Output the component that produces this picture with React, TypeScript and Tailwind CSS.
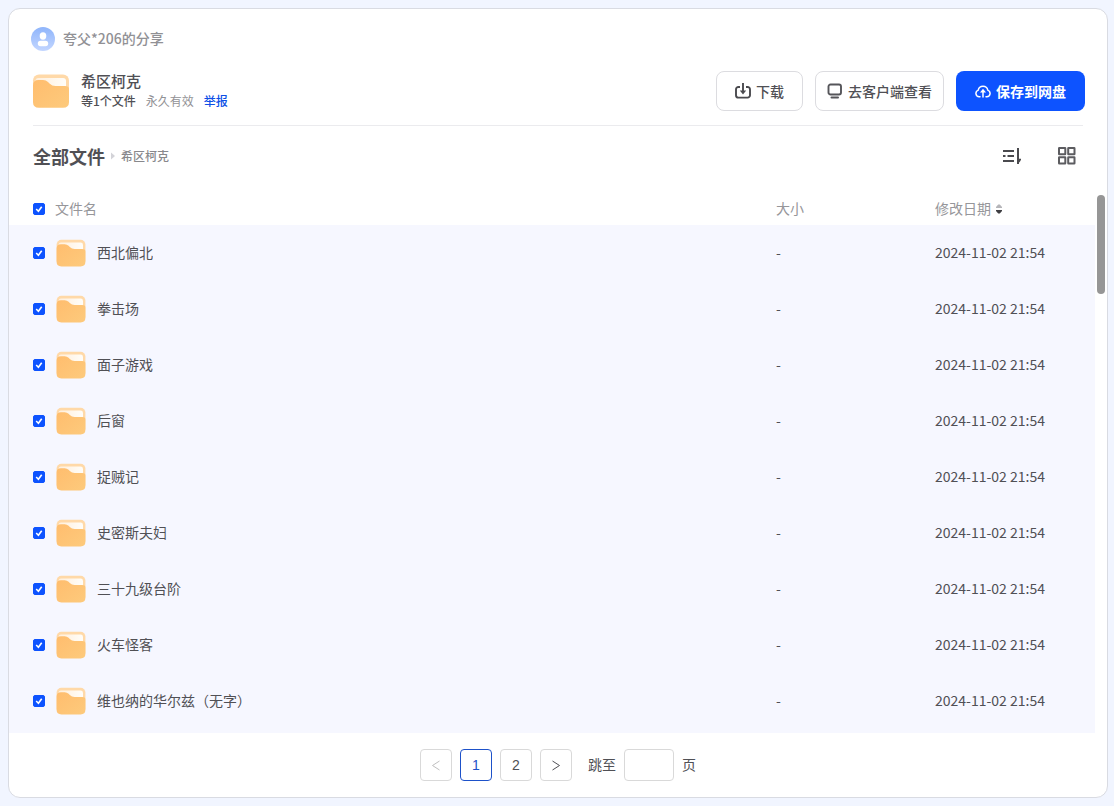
import React from 'react';

const FILES = [
  '西北偏北',
  '拳击场',
  '面子游戏',
  '后窗',
  '捉贼记',
  '史密斯夫妇',
  '三十九级台阶',
  '火车怪客',
  '维也纳的华尔兹（无字）',
];

const MODIFIED_AT = '2024-11-02 21:54';

function FolderIcon({ className }: { className?: string }) {
  return (
    <svg viewBox="0 0 40 40" className={className} aria-hidden="true">
      <defs>
        <linearGradient id="folder-front" x1="0" y1="0" x2="1" y2="1">
          <stop offset="0" stopColor="#ffbd6e" />
          <stop offset="1" stopColor="#fdca7c" />
        </linearGradient>
        <linearGradient id="folder-paper" x1="0" y1="0" x2="1" y2="0">
          <stop offset="0" stopColor="#ffefdc" />
          <stop offset="1" stopColor="#fffdf8" />
        </linearGradient>
      </defs>
      <rect x="2" y="3.500" width="36" height="32" rx="6" fill="#ffd9a8" />
      <rect x="4.500" y="7" width="30.500" height="16" rx="3" fill="url(#folder-paper)" />
      <path
        d="M2 14.500Q2 9 7.500 9H12Q15 9 17 11L18.500 12.500Q21 15 24.500 15H34Q38 15 38 18V31Q38 36.800 32 36.800H8Q2 36.800 2 31Z"
        fill="url(#folder-front)"
      />
    </svg>
  );
}

function AvatarIcon() {
  return (
    <svg viewBox="0 0 24 24" className="size-6" aria-hidden="true">
      <defs>
        <linearGradient id="avatar-bg" x1="0" y1="0" x2="0" y2="1">
          <stop offset="0" stopColor="#8fb5fb" />
          <stop offset="1" stopColor="#c3d6ff" />
        </linearGradient>
      </defs>
      <circle cx="12" cy="12" r="12" fill="url(#avatar-bg)" />
      <ellipse cx="12" cy="9" rx="3.300" ry="3.700" fill="#fff" />
      <rect x="6.800" y="13.800" width="10.400" height="5.400" rx="2.700" fill="#fff" />
    </svg>
  );
}

function DownloadIcon() {
  return (
    <svg viewBox="0 0 16 16" className="size-4" fill="none" stroke="#4a4a4e" strokeWidth="1.900" aria-hidden="true">
      <path d="M5 4H3.400A2.400 2.400 0 0 0 1 6.400V12.200A2.400 2.400 0 0 0 3.400 14.600H12.600A2.400 2.400 0 0 0 15 12.200V6.400A2.400 2.400 0 0 0 12.600 4H11" />
      <path d="M8 0V8" />
      <path d="M4.800 7.500H11.200L8 11.500Z" fill="#4a4a4e" stroke="none" />
    </svg>
  );
}

function ClientIcon() {
  return (
    <svg viewBox="0 0 16 16" className="size-4" fill="none" stroke="#55555a" strokeWidth="1.900" aria-hidden="true">
      <rect x="1.500" y="1.500" width="12.500" height="10" rx="2" />
      <path d="M4.500 14.400H11" strokeWidth="2" strokeLinecap="round" />
    </svg>
  );
}

function CloudIcon() {
  return (
    <svg viewBox="0 0 16 16" className="size-4" fill="none" stroke="#fff" strokeWidth="1.500" strokeLinecap="round" aria-hidden="true">
      <path d="M5 13.700H4.200A3.400 3.400 0 0 1 3.200 7.100A4.900 4.900 0 0 1 12.800 7.100A3.400 3.400 0 0 1 11.800 13.700H11" />
      <path d="M8 14V8.500" />
      <path d="M5 9.400H11L8 5.800Z" fill="#fff" stroke="none" />
    </svg>
  );
}

function SortIcon() {
  return (
    <svg viewBox="0 0 20 20" className="size-5" fill="none" stroke="#4a4a4e" strokeWidth="2" aria-hidden="true">
      <path d="M2 5H13M2 10H4.500M6.500 10H13M2 15H13" />
      <path d="M17 2V18" />
      <path d="M17 17.800V12.800H20.500L19 15.500Z" fill="#4a4a4e" stroke="none" />
    </svg>
  );
}

function GridIcon() {
  return (
    <svg viewBox="0 0 20 20" className="size-5" fill="none" stroke="#5c5c60" strokeWidth="2" aria-hidden="true">
      <rect x="2" y="2" width="6.300" height="6.300" rx="0.300" />
      <rect x="11.200" y="2" width="6.300" height="6.300" rx="0.300" />
      <rect x="2" y="11.200" width="6.300" height="6.300" rx="0.300" />
      <rect x="11.200" y="11.200" width="6.300" height="6.300" rx="0.300" />
    </svg>
  );
}

interface CheckboxProps {
  label: string;
  checked: boolean;
  onChange: () => void;
}

function Checkbox({ label, checked, onChange }: CheckboxProps) {
  return (
    <span className="grid size-3 shrink-0">
      <input
        type="checkbox"
        aria-label={label}
        checked={checked}
        onChange={onChange}
        className="size-3 appearance-none rounded-xs border border-gray-300 bg-white [grid-area:1/1] checked:border-[#0d53ff] checked:bg-[#0d53ff]"
      />
      {checked && (
        <svg viewBox="0 0 12 12" className="pointer-events-none size-3 [grid-area:1/1]" fill="none" stroke="#fff" strokeWidth="1.600" aria-hidden="true">
          <path d="M3.200 6L5.400 8.200L8.700 3.700" />
        </svg>
      )}
    </span>
  );
}

export default function App() {
  const [selected, setSelected] = React.useState<string[]>(FILES);
  const [page, setPage] = React.useState(1);
  const [jump, setJump] = React.useState('');

  const allSelected = selected.length === FILES.length;

  const toggleFile = (name: string) => {
    setSelected((prev) => (prev.includes(name) ? prev.filter((n) => n !== name) : [...prev, name]));
  };

  const pageButton = 'flex size-8 items-center justify-center rounded border bg-white';

  return (
    <div className="flex min-h-screen bg-[#f1f5ff] py-2 pr-1.5 pl-2 font-['Noto_Sans_CJK_SC',sans-serif] text-sm text-[#505055]">
      <main className="flex min-w-0 flex-1 flex-col rounded-xl border border-[#d9dbe2] bg-white">
        <header className="px-[22px] pt-[18px] pb-3.5">
          <div className="flex h-6 items-center gap-2 font-medium text-[#919195]">
            <AvatarIcon />
            <span className="pb-0.5">夸父*206的分享</span>
          </div>

          <div className="mt-5 flex items-center gap-3">
            <div className="flex flex-1 items-center gap-2.5">
              <FolderIcon className="size-10" />
              <div>
                <h1 className="text-[15px] leading-5 font-medium">希区柯克</h1>
                <div className="flex gap-2.5 text-xs leading-5">
                  <span className="font-medium">等1个文件</span>
                  <span className="text-[#919195]">永久有效</span>
                  <a href="#report" className="font-medium text-[#0d4fe6]">举报</a>
                </div>
              </div>
            </div>
            <button type="button" className="flex h-10 items-center gap-[5px] rounded-lg border border-[#dcdce0] px-[18px] font-medium">
              <DownloadIcon />
              下载
            </button>
            <button type="button" className="flex h-10 items-center gap-[5px] rounded-lg border border-[#dcdce0] px-[11px] font-medium">
              <ClientIcon />
              去客户端查看
            </button>
            <button type="button" className="flex h-10 items-center gap-[5px] rounded-lg bg-[#0d53ff] px-[19px] font-bold text-white">
              <CloudIcon />
              保存到网盘
            </button>
          </div>
        </header>

        <div className="mx-6 mb-[7px] flex h-[61px] items-center border-t border-[#ebebee]">
          <nav className="flex flex-1 items-center gap-1.5">
            <a href="#all" className="text-lg font-bold">全部文件</a>
            <svg viewBox="0 0 4 8" className="h-2 w-1" fill="#d3d3d8" aria-hidden="true">
              <path d="M0 0.500L4 4L0 7.500Z" />
            </svg>
            <span className="text-xs font-medium text-[#88888c]">希区柯克</span>
          </nav>
          <div className="flex gap-9 pr-1.5">
            <button type="button" aria-label="排序">
              <SortIcon />
            </button>
            <button type="button" aria-label="网格视图">
              <GridIcon />
            </button>
          </div>
        </div>

        <div className="flex flex-1">
          <div className="min-w-0 flex-1 bg-[#f6f7ff] pb-1">
            <table className="w-full table-fixed text-left">
              <thead className="bg-white text-[#96969a]">
                <tr className="h-8">
                  <th className="p-0 pl-6 font-normal">
                    <div className="flex items-center gap-2.5">
                      <Checkbox
                        label="全选"
                        checked={allSelected}
                        onChange={() => setSelected(allSelected ? [] : FILES)}
                      />
                      <span className="pb-0.5">文件名</span>
                    </div>
                  </th>
                  <th className="w-[159px] p-0 pb-0.5 font-normal">大小</th>
                  <th className="w-40 p-0 font-normal">
                    <button type="button" className="flex items-center gap-1">
                      <span className="pb-0.5">修改日期</span>
                      <svg viewBox="0 0 8 10" className="h-2.5 w-2" aria-hidden="true">
                        <path d="M1 4V3L3.200 .500H4.800L7 3V4Z" fill="#b5b5b9" />
                        <path d="M1 6V7L3.200 9.500H4.800L7 7V6Z" fill="#3e3e42" />
                      </svg>
                    </button>
                  </th>
                </tr>
              </thead>
              <tbody>
                {FILES.map((name) => (
                  <tr key={name} className="h-14">
                    <td className="p-0 pl-6">
                      <div className="flex items-center gap-2.5">
                        <Checkbox
                          label={name}
                          checked={selected.includes(name)}
                          onChange={() => toggleFile(name)}
                        />
                        <FolderIcon className="size-8 shrink-0" />
                        <span className="truncate pb-0.5">{name}</span>
                      </div>
                    </td>
                    <td className="p-0 pb-0.5">-</td>
                    <td className="p-0 pb-0.5">{MODIFIED_AT}</td>
                  </tr>
                ))}
              </tbody>
            </table>
          </div>
          <div className="w-3 px-0.5 pt-0.5">
            <div className="h-[99px] rounded-full bg-[#969696]" />
          </div>
        </div>

        <footer className="flex items-center justify-center gap-2 py-4 font-['Liberation_Sans','Noto_Sans_CJK_SC',sans-serif]">
          <button type="button" aria-label="上一页" disabled={page === 1} onClick={() => setPage(1)} className={`${pageButton} border-[#d9d9d9] disabled:text-[#bfbfbf]`}>
            <svg viewBox="0 0 12 12" className="size-3" fill="none" stroke="currentColor" aria-hidden="true">
              <path d="M9.500 2L2.500 6.500L9.500 11" />
            </svg>
          </button>
          {[1, 2].map((num) => (
            <button
              key={num}
              type="button"
              onClick={() => setPage(num)}
              className={`${pageButton} ${num === page ? 'border-[#1d51c9] text-[#1d51c9]' : 'border-[#d9d9d9]'}`}
            >
              {num}
            </button>
          ))}
          <button type="button" aria-label="下一页" disabled={page === 2} onClick={() => setPage(2)} className={`${pageButton} border-[#d9d9d9] disabled:text-[#bfbfbf]`}>
            <svg viewBox="0 0 12 12" className="size-3" fill="none" stroke="currentColor" aria-hidden="true">
              <path d="M2.500 2L9.500 6.500L2.500 11" />
            </svg>
          </button>
          <label className="ml-2 flex items-center gap-2">
            跳至
            <input
              type="text"
              value={jump}
              onChange={(e) => setJump(e.target.value)}
              className="h-8 w-[50px] rounded border border-[#d9d9d9] px-2"
            />
            页
          </label>
        </footer>
      </main>
    </div>
  );
}
